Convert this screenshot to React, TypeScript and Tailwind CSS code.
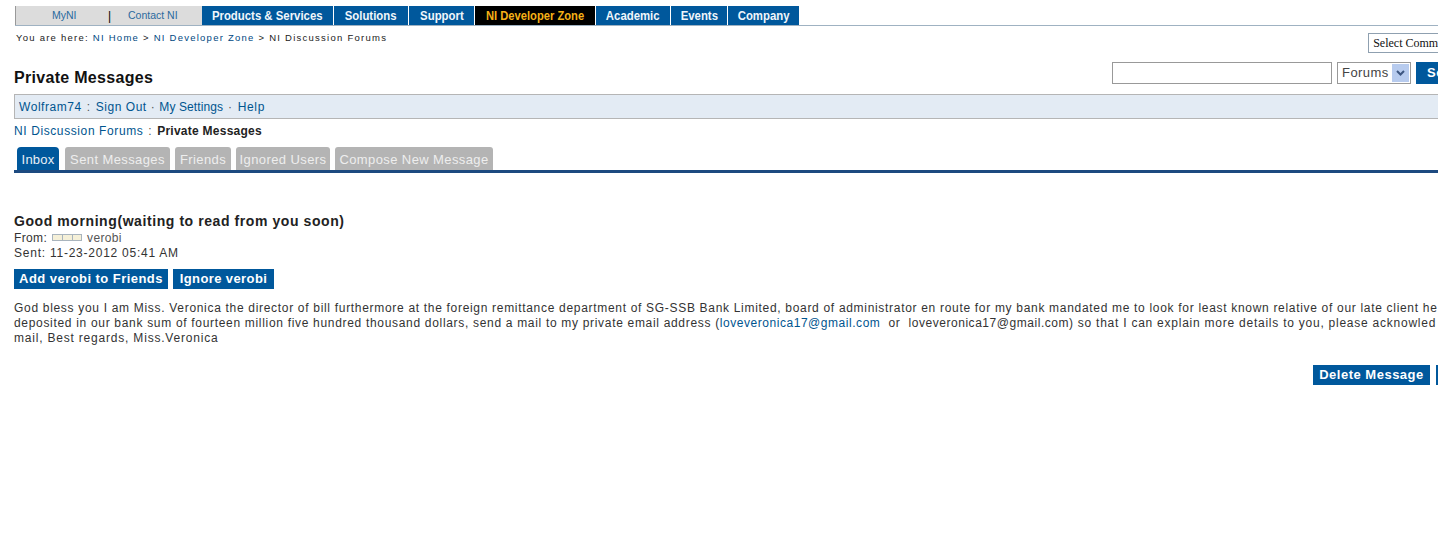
const NAV = [
  { label: "Products & Services", width: "w-[132px]" },
  { label: "Solutions", width: "w-[75px]" },
  { label: "Support", width: "w-[66px]" },
];
const NAV_RIGHT = [
  { label: "Academic", width: "w-[75px]" },
  { label: "Events", width: "w-[57px]" },
  { label: "Company", width: "w-[72px]" },
];
const TABS = [
  { label: "Sent Messages", width: "w-[105px]" },
  { label: "Friends", width: "w-[56px]" },
  { label: "Ignored Users", width: "w-[94px]" },
  { label: "Compose New Message", width: "w-[158px]" },
];

function NavItem({ label, width }: { label: string; width: string }) {
  return (
    <a className={`flex h-[19px] items-center justify-center border-r border-white bg-[#00589c] pt-[1px] text-[13px] font-bold text-[#f0f6fb] ${width}`}>
      <span className="inline-block scale-x-[0.875] whitespace-nowrap">{label}</span>
    </a>
  );
}

function BlueButton({ children, className = "" }: { children: React.ReactNode; className?: string }) {
  return (
    <button className={`h-[20px] bg-[#00589c] text-[13px] font-bold text-white ${className}`}>
      {children}
    </button>
  );
}

export default function App() {
  return (
    <div className="h-[542px] w-[1438px] overflow-hidden bg-white font-['Liberation_Sans',Arial,sans-serif] text-[12px] text-[#333]">
      <div className="w-[1520px] pt-[6px]">
        {/* top nav */}
        <div className="ml-[15px] flex h-[20px] border-b border-[#9fb2c2]">
          <div className="flex h-[19px] w-[187px] items-center border-l border-[#999] bg-[#dcdcdc] text-[10.5px] text-[#2a6a9e]">
            <span className="ml-[36px] w-[56px]">MyNI</span>
            <span className="w-[20px] text-[12px] text-black">|</span>
            <span>Contact NI</span>
          </div>
          <div className="flex">
            {NAV.map((n) => (
              <NavItem key={n.label} {...n} />
            ))}
            <a className="flex h-[19px] w-[121px] items-center justify-center border-r border-white bg-black pt-[1px] text-[13px] font-bold text-[#f5b117]">
              <span className="inline-block scale-x-[0.86] whitespace-nowrap">NI Developer Zone</span>
            </a>
            {NAV_RIGHT.map((n) => (
              <NavItem key={n.label} {...n} />
            ))}
          </div>
        </div>

        {/* breadcrumb + community select */}
        <div className="flex h-[36px] items-start">
          <p className="ml-[16px] mt-[5px] text-[9.5px] leading-[14px] tracking-[1.25px] text-[#222]">
            You are here: <span className="text-[#00487f]">NI Home</span> &gt;{" "}
            <span className="text-[#00487f]">NI Developer Zone</span> &gt; NI Discussion Forums
          </p>
          <div className="ml-[981px] mt-[7px] h-[20px] w-[130px] border border-[#8fa0b0] pl-[4px] font-['Liberation_Serif',serif] text-[12px] leading-[19px] text-[#111]">
            Select Community
          </div>
        </div>

        {/* title + search */}
        <div className="flex h-[32px] items-start">
          <h1 className="ml-[14px] mt-[6px] text-[16px] leading-[20px] font-bold tracking-[0.3px] text-[#111]">Private Messages</h1>
          <div className="ml-[959px] flex">
            <input className="h-[22px] w-[220px] border border-[#999] bg-white" />
            <div className="ml-[5px] flex h-[22px] w-[74px] items-center border border-[#999] pr-[1px] pl-[4px] text-[13px] tracking-[0.4px] text-[#444]">
              <span className="flex-1">Forums</span>
              <span className="flex h-[18px] w-[17px] items-center justify-center bg-[#b7cbee]">
                <svg width="9" height="6" viewBox="0 0 9 6">
                  <path d="M1 1l3.5 3.5L8 1" fill="none" stroke="#3d5680" strokeWidth="2" />
                </svg>
              </span>
            </div>
            <button className="ml-[5px] h-[22px] w-[70px] bg-[#00589c] pl-[11px] text-left text-[13px] font-bold tracking-[0.5px] text-white">
              Search
            </button>
          </div>
        </div>

        {/* user bar */}
        <div className="ml-[14px] flex h-[25px] items-center border-y border-l border-[#b5b5b5] bg-[#e3ebf4] pl-[4px] text-[12px] tracking-[0.55px] text-[#00558f]">
          <span>Wolfram74</span>
          <span className="mx-[5px] text-[#555]">:</span>
          <span>Sign Out</span>
          <span className="mx-[4px] text-[#555]">·</span>
          <span className="tracking-[0.1px]">My Settings</span>
          <span className="mx-[5px] text-[#555]">·</span>
          <span className="tracking-[0.7px]">Help</span>
        </div>

        {/* forum crumb */}
        <p className="ml-[14px] mt-[3px] text-[12px] leading-[18px] tracking-[0.6px] text-[#00558f]">
          NI Discussion Forums <span className="mx-[1px] text-[#555]">:</span>{" "}
          <span className="font-bold tracking-[0.25px] text-[#222]">Private Messages</span>
        </p>

        {/* tabs */}
        <div className="ml-[14px] mt-[7px] flex h-[26px] items-end gap-[5px] border-b-[3px] border-[#1d4a80] pl-[3px]">
          <a className="mr-[1px] flex h-[23px] w-[42px] items-center justify-center rounded-t-[4px] bg-[#00589c] pt-[2px] text-[13px] tracking-[0.2px] text-[#e8f0f7]">Inbox</a>
          {TABS.map((t) => (
            <a key={t.label} className={`flex h-[23px] items-center justify-center rounded-t-[3px] bg-[#b4b4b4] pt-[2px] text-[13px] tracking-[0.4px] whitespace-nowrap text-[#eeeeee] ${t.width}`}>
              {t.label}
            </a>
          ))}
        </div>

        {/* message */}
        <div className="ml-[14px] mt-[40px]">
          <h2 className="mb-[1px] text-[14px] leading-[16px] font-bold tracking-[0.58px] text-[#222]">Good morning(waiting to read from you soon)</h2>
          <div className="flex h-[15px] items-center text-[12px] tracking-[0.35px] text-[#333]">
            From:
            <span className="mx-[5px] flex h-[7px] w-[30px] border border-[#a9b4bd] bg-[#f5f0d8]">
              <span className="w-[10px] border-r border-[#a9b4bd]" />
              <span className="w-[10px] border-r border-[#a9b4bd]" />
            </span>
            <span className="text-[#555]">verobi</span>
          </div>
          <p className="mt-[1px] text-[12px] leading-[15px] tracking-[0.76px]">Sent: 11-23-2012 05:41 AM</p>
          <div className="mt-[8px] flex gap-[5px]">
            <BlueButton className="w-[154px] tracking-[0.45px]">Add verobi to Friends</BlueButton>
            <BlueButton className="w-[101px] tracking-[0.4px]">Ignore verobi</BlueButton>
          </div>
          <div className="mt-[12px] text-[12px] leading-[15px] whitespace-nowrap text-[#333]">
            <p className="tracking-[0.69px]">
              God bless you I am Miss. Veronica the director of bill furthermore at the foreign remittance department of SG-SSB Bank Limited, board of administrator en route for my bank mandated me to look for least known relative of our late client he
            </p>
            <p className="tracking-[0.685px]">
              deposited in our bank sum of fourteen million five hundred thousand dollars, send a mail to my private email address (<span className="tracking-[0.54px] text-[#00558f]">loveveronica17@gmail.com</span>&nbsp; or&nbsp; <span className="tracking-[0.54px]">loveveronica17@gmail.com</span>) <span className="tracking-[0.76px]">so that I can explain more details to you, please acknowled</span>
            </p>
            <p className="tracking-[0.8px]">mail, Best regards, Miss.Veronica</p>
          </div>
          <div className="mt-[19px] flex">
            <BlueButton className="ml-[1299px] w-[117px] tracking-[0.5px]">Delete Message</BlueButton>
            <BlueButton className="ml-[6px] w-[70px] tracking-[0.5px]">Next</BlueButton>
          </div>
        </div>
      </div>
    </div>
  );
}
